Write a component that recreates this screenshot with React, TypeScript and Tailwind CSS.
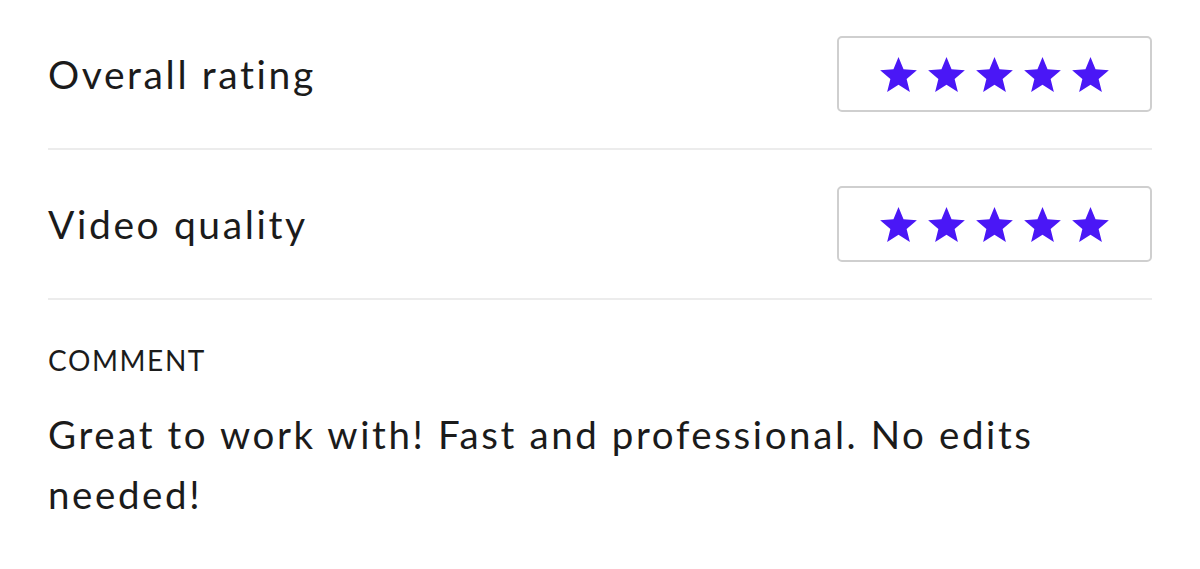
const Star = () => (
  <svg viewBox="0 0 24 24" className="w-[39px] h-[39px] fill-[#4a17f6]">
    <path d="M12 1.2l3.1 7.6 8.2.6-6.3 5.3 2 8-7-4.4-7 4.4 2-8L.7 9.4l8.2-.6z" />
  </svg>
);

const RatingRow = ({ label }: { label: string }) => {
  return (
    <div className="flex items-center justify-between py-[36px] border-b-2 border-[#ececec]">
      <span className="text-[39px] leading-none tracking-[2.6px] text-[#1b1b1b]">{label}</span>
      <div className="flex items-center justify-center gap-[9px] w-[315px] h-[76px] border-2 border-[#cfcfcf] rounded-[5px] bg-white">
        {Array(5)
          .fill(0)
          .map((_, i) => (
            <Star key={i} />
          ))}
      </div>
    </div>
  );
};

const App = () => {
  return (
    <div
      className="w-[1200px] h-[569px] bg-white px-[48px]"
      style={{ fontFamily: "Lato, 'Noto Sans', sans-serif" }}
    >
      <RatingRow label="Overall rating" />
      <RatingRow label="Video quality" />
      <div className="pt-[46px]">
        <h3 className="text-[28px] leading-none tracking-[1.6px] text-[#1b1b1b]">COMMENT</h3>
        <p className="mt-[30px] text-[38.5px] leading-[60px] tracking-[2.6px] text-[#1b1b1b]">
          Great to work with! Fast and professional. No edits needed!
        </p>
      </div>
    </div>
  );
};

export default App;
